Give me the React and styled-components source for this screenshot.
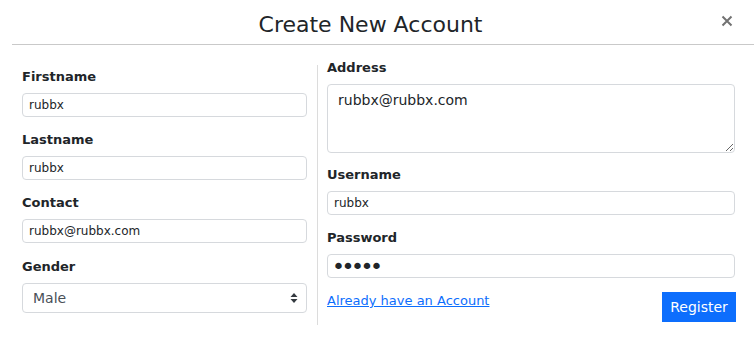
import React from "react";
import styled, { createGlobalStyle } from "styled-components";

const GlobalStyle = createGlobalStyle`
  * { box-sizing: border-box; }
  body {
    margin: 0;
    background: #fff;
    font-family: "DejaVu Sans", "Noto Sans", sans-serif;
    color: #212529;
  }
`;

const Modal = styled.div`
  margin-left: 12px;
  width: 742px;
`;

const Header = styled.header`
  display: flex;
  align-items: center;
  height: 45px;
  padding-right: 17px;
  border-bottom: 1px solid #c9c9c9;
`;

const Title = styled.h2`
  flex: 1;
  margin: 6px 0 0;
  padding-left: 12px;
  text-align: center;
  font-size: 22px;
  font-weight: normal;
  line-height: 28px;
  color: #212529;
`;

const Close = styled.button`
  width: 20px;
  height: 20px;
  margin-top: -3px;
  padding: 0;
  border: 0;
  background: transparent;
  display: grid;
  place-items: center;
  cursor: pointer;
`;

const Body = styled.form`
  display: flex;
  padding: 14px 0 0 10px;
`;

const Column = styled.div`
  display: flex;
  flex-direction: column;
  width: ${(p) => p.$width}px;
  padding-top: ${(p) => p.$top || 0}px;
`;

const Divider = styled.div`
  width: 1px;
  margin: 6px 9px 0 10px;
  height: 260px;
  background: #dcdcdc;
`;

const Field = styled.div`
  display: flex;
  flex-direction: column;
  margin-bottom: ${(p) => p.$gap ?? 15}px;
`;

const Label = styled.label`
  font-size: 13px;
  font-weight: bold;
  line-height: 16px;
  margin-bottom: 8px;
`;

const Input = styled.input`
  height: 24px;
  width: 100%;
  padding: 3px 6px;
  font-family: inherit;
  font-size: 12px;
  line-height: 16px;
  color: #212529;
  border: 1px solid #d6d9dd;
  border-radius: 4px;
  outline: none;

  &[type="password"] {
    padding: 0 4px;
    font-size: 22px;
    line-height: 22px;
    letter-spacing: -3.5px;
  }
`;

const TextArea = styled.textarea`
  height: 69px;
  width: 100%;
  padding: 6px 10px;
  font-family: inherit;
  font-size: 14px;
  line-height: 18px;
  color: #212529;
  border: 1px solid #d6d9dd;
  border-radius: 4px;
  outline: none;
`;

const SelectWrap = styled.div`
  position: relative;
`;

const Select = styled.select`
  appearance: none;
  width: 100%;
  height: 30px;
  padding: 5px 10px;
  font-family: inherit;
  font-size: 14px;
  color: #495057;
  background: #fff;
  border: 1px solid #d6d9dd;
  border-radius: 4px;
  outline: none;
`;

const Caret = styled.svg`
  position: absolute;
  right: 9px;
  top: 10px;
  pointer-events: none;
`;

const Actions = styled.div`
  display: flex;
  justify-content: space-between;
  align-items: flex-start;
`;

const Link = styled.a`
  font-size: 13px;
  line-height: 16px;
  color: #0d6efd;
  text-decoration: underline;
`;

const Button = styled.button`
  width: 74px;
  height: 30px;
  margin-top: -1px;
  margin-right: -1px;
  border: 0;
  background: #0d6efd;
  color: #fff;
  font-family: inherit;
  font-size: 14px;
  cursor: pointer;
`;

export default function App() {
  return (
    <>
      <GlobalStyle />
      <Modal>
        <Header>
          <Title>Create New Account</Title>
          <Close aria-label="close">
            <svg width="12" height="12" viewBox="0 0 12 12">
              <path d="M1.5 1.5 L10.5 10.5 M10.5 1.5 L1.5 10.5" stroke="#727272" strokeWidth="2" />
            </svg>
          </Close>
        </Header>
        <Body>
          <Column $width={285} $top={10}>
            <Field>
              <Label>Firstname</Label>
              <Input defaultValue="rubbx" />
            </Field>
            <Field>
              <Label>Lastname</Label>
              <Input defaultValue="rubbx" />
            </Field>
            <Field $gap={16}>
              <Label>Contact</Label>
              <Input defaultValue="rubbx@rubbx.com" />
            </Field>
            <Field>
              <Label>Gender</Label>
              <SelectWrap>
                <Select defaultValue="Male">
                  <option>Male</option>
                  <option>Female</option>
                </Select>
                <Caret width="8" height="10" viewBox="0 0 8 10">
                  <path d="M4 0 L7.5 4 L0.5 4 Z M4 10 L7.5 6 L0.5 6 Z" fill="#343a40" />
                </Caret>
              </SelectWrap>
            </Field>
          </Column>
          <Divider />
          <Column $width={408} $top={1}>
            <Field $gap={14}>
              <Label>Address</Label>
              <TextArea defaultValue="rubbx@rubbx.com" />
            </Field>
            <Field>
              <Label>Username</Label>
              <Input defaultValue="rubbx" />
            </Field>
            <Field>
              <Label>Password</Label>
              <Input type="password" defaultValue="rubbx" />
            </Field>
            <Actions>
              <Link href="#">Already have an Account</Link>
              <Button type="button">Register</Button>
            </Actions>
          </Column>
        </Body>
      </Modal>
    </>
  );
}
